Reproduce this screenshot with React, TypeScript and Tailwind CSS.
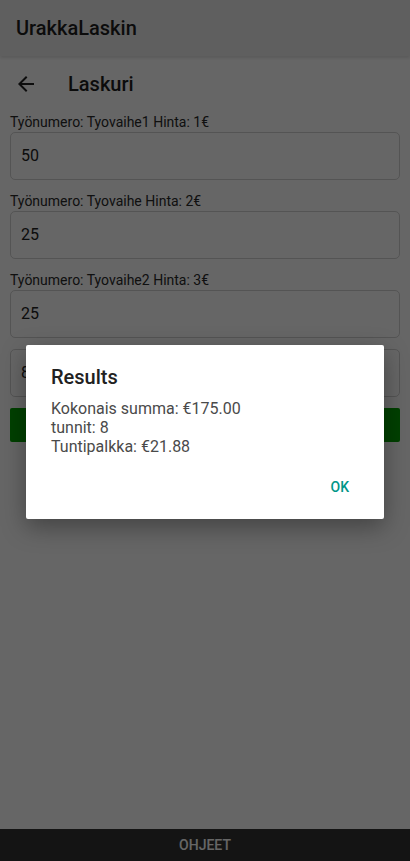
import { useState } from 'react';

const rows = [
  { label: 'Työnumero: Tyovaihe1 Hinta: 1€', value: '50' },
  { label: 'Työnumero: Tyovaihe Hinta: 2€', value: '25' },
  { label: 'Työnumero: Tyovaihe2 Hinta: 3€', value: '25' },
];

function BackArrow() {
  return (
    <svg width="24" height="24" viewBox="0 0 24 24" className="fill-[#222]">
      <path d="M20 11H7.83l5.59-5.59L12 4l-8 8 8 8 1.41-1.41L7.83 13H20v-2z" />
    </svg>
  );
}

export default function App() {
  const [open, setOpen] = useState(true);

  return (
    <div className="relative h-[861px] w-[410px] overflow-hidden bg-white font-['Roboto',sans-serif] text-[#222]">
      <div className="flex h-full flex-col">
        {/* App bar */}
        <div className="flex h-[56px] shrink-0 items-center bg-[#eeeeee] px-4 shadow-[0_2px_3px_rgba(0,0,0,0.12)]">
          <span className="text-[20px] font-medium text-[#1e1e1e]">UrakkaLaskin</span>
        </div>

        {/* Screen header */}
        <div className="flex h-[56px] shrink-0 items-center pl-[14px]">
          <BackArrow />
          <span className="ml-[30px] text-[20px] font-medium text-[#1e1e1e]">Laskuri</span>
        </div>

        {/* Form */}
        <div className="flex flex-col px-[10px]">
          {rows.map((r, i) => (
            <div key={i} className={i > 0 ? 'mt-[11px]' : ''}>
              <div className="text-[14px] leading-[20px] text-[#2a2a2a]">{r.label}</div>
              <div className="flex h-[48px] items-center rounded-[5px] border border-[#d2d2d2] px-[10px] text-[16px] text-[#222]">
                {r.value}
              </div>
            </div>
          ))}
          <div className="mt-[11px] flex h-[48px] items-center rounded-[5px] border border-[#d2d2d2] px-[10px] text-[16px] text-[#222]">
            8
          </div>
          <div className="mt-[11px] h-[34px] rounded-[2px] bg-[#00a000]" />
        </div>

        <div className="flex-1" />

        {/* Bottom bar */}
        <div className="flex h-[32px] shrink-0 items-center justify-center bg-[#333333] text-[14px] font-medium text-white">
          OHJEET
        </div>
      </div>

      {open && (
        <div className="absolute inset-0 flex items-center justify-center bg-black/60">
          <div className="mt-[3px] w-[358px] rounded-[2px] bg-white pt-[20px] pb-[13px] shadow-[0_8px_24px_rgba(0,0,0,0.35)]">
            <div className="px-[25px] text-[20px] font-medium leading-[24px] text-[#212121]">Results</div>
            <div className="mt-[11px] px-[25px] text-[16px] leading-[18.75px] text-[#4a4a4a]">
              <div>Kokonais summa: €175.00</div>
              <div>tunnit: 8</div>
              <div>Tuntipalkka: €21.88</div>
            </div>
            <div className="mt-[13px] flex justify-end pr-[27px]">
              <button
                onClick={() => setOpen(false)}
                className="flex h-[36px] items-center px-[8px] text-[14px] font-medium text-[#009688]"
              >
                OK
              </button>
            </div>
          </div>
        </div>
      )}
    </div>
  );
}
